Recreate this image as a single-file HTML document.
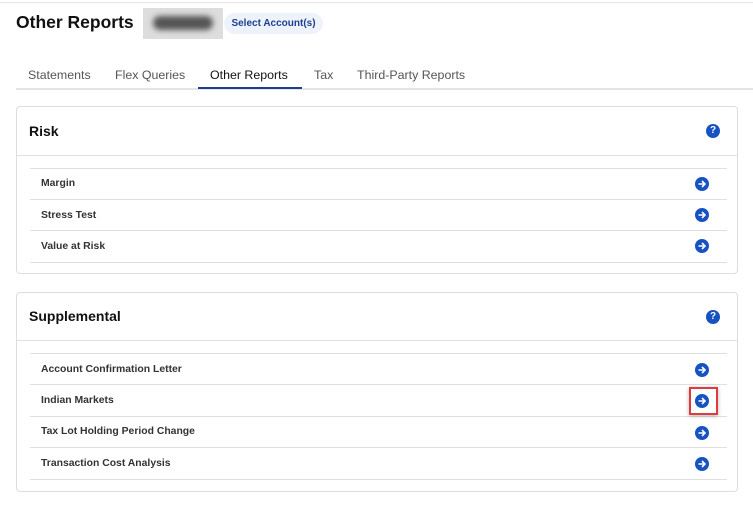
<!DOCTYPE html><html><head><style>
body{margin:0;width:753px;height:525px;background:#fff;font-family:"Liberation Sans",Arial,sans-serif;position:relative;overflow:hidden;color:#222}
.a{position:absolute}
.card{position:absolute;left:16px;width:722px;border:1px solid #ddd;border-radius:4px;box-sizing:border-box}
.line{position:absolute;left:13px;width:697px;height:1px;background:#e0e0e0}
.row{position:absolute;left:24px;font-size:10.4px;font-weight:bold;color:#333}
.ic{position:absolute;left:678px;width:14px;height:14px;border-radius:50%;background:#1652c0}
.ic svg{display:block}
.q{position:absolute;left:689px;width:14px;height:14px;border-radius:50%;background:#1652c0;color:#fff;font-size:10px;font-weight:bold;text-align:center;line-height:14px}
.h{position:absolute;left:12px;font-size:14px;font-weight:bold;color:#111}
.tab{position:absolute;top:68px;font-size:12.4px;color:#555}
</style></head><body>
<div class="a" style="left:0;top:2px;width:753px;height:1px;background:#e6e6e6"></div>
<div class="a" style="left:16px;top:12px;font-size:17.5px;font-weight:bold;color:#111">Other Reports</div>
<div class="a" style="left:143px;top:8px;width:80px;height:31px;background:#ddd"><div style="margin:8px 10px;height:14px;border-radius:7px;background:#555;filter:blur(3px)"></div></div>
<div class="a" style="left:224px;top:13px;width:99px;height:21px;border-radius:11px;background:#eef2fa;color:#1d3f8f;font-size:10px;font-weight:bold;line-height:21px;text-align:center">Select Account(s)</div>
<div class="tab" style="left:28px">Statements</div>
<div class="tab" style="left:115px">Flex Queries</div>
<div class="tab" style="left:210px;color:#111">Other Reports</div>
<div class="tab" style="left:314px">Tax</div>
<div class="tab" style="left:357px">Third-Party Reports</div>
<div class="a" style="left:16px;top:88px;width:737px;height:2px;background:#e4e4e4"></div>
<div class="a" style="left:198px;top:87px;width:104px;height:2px;background:#1d3f8f"></div>

<div class="card" style="top:106px;height:168px">
<div class="h" style="top:16px">Risk</div><div class="q" style="top:17px">?</div>
<div class="a" style="left:0;top:48px;width:720px;height:1px;background:#e0e0e0"></div>
<div class="line" style="top:61px"></div><div class="line" style="top:92px"></div><div class="line" style="top:123px"></div><div class="line" style="top:155px"></div>
<div class="row" style="top:71px">Margin</div><div class="row" style="top:103px">Stress Test</div><div class="row" style="top:134px">Value at Risk</div>
<div class="ic" style="top:70px"><svg width="14" height="14"><path d="M3.5 7H10M7 4l3 3-3 3" stroke="#fff" stroke-width="1.6" fill="none"/></svg></div>
<div class="ic" style="top:101px"><svg width="14" height="14"><path d="M3.5 7H10M7 4l3 3-3 3" stroke="#fff" stroke-width="1.6" fill="none"/></svg></div>
<div class="ic" style="top:132px"><svg width="14" height="14"><path d="M3.5 7H10M7 4l3 3-3 3" stroke="#fff" stroke-width="1.6" fill="none"/></svg></div>
</div>

<div class="card" style="top:292px;height:200px">
<div class="h" style="top:15px">Supplemental</div><div class="q" style="top:17px">?</div>
<div class="a" style="left:0;top:47px;width:720px;height:1px;background:#e0e0e0"></div>
<div class="line" style="top:60px"></div><div class="line" style="top:91px"></div><div class="line" style="top:123px"></div><div class="line" style="top:154px"></div><div class="line" style="top:186px"></div>
<div class="row" style="top:71px">Account Confirmation Letter</div><div class="row" style="top:102px">Indian Markets</div><div class="row" style="top:133px">Tax Lot Holding Period Change</div><div class="row" style="top:165px">Transaction Cost Analysis</div>
<div class="ic" style="top:70px"><svg width="14" height="14"><path d="M3.5 7H10M7 4l3 3-3 3" stroke="#fff" stroke-width="1.6" fill="none"/></svg></div>
<div class="a" style="left:672px;top:94px;width:29px;height:28px;border:2px solid #e0393e;box-shadow:0 1px 4px rgba(0,0,0,.3);box-sizing:border-box"></div>
<div class="ic" style="top:101px"><svg width="14" height="14"><path d="M3.5 7H10M7 4l3 3-3 3" stroke="#fff" stroke-width="1.6" fill="none"/></svg></div>
<div class="ic" style="top:133px"><svg width="14" height="14"><path d="M3.5 7H10M7 4l3 3-3 3" stroke="#fff" stroke-width="1.6" fill="none"/></svg></div>
<div class="ic" style="top:164px"><svg width="14" height="14"><path d="M3.5 7H10M7 4l3 3-3 3" stroke="#fff" stroke-width="1.6" fill="none"/></svg></div>
</div>
</body></html>
